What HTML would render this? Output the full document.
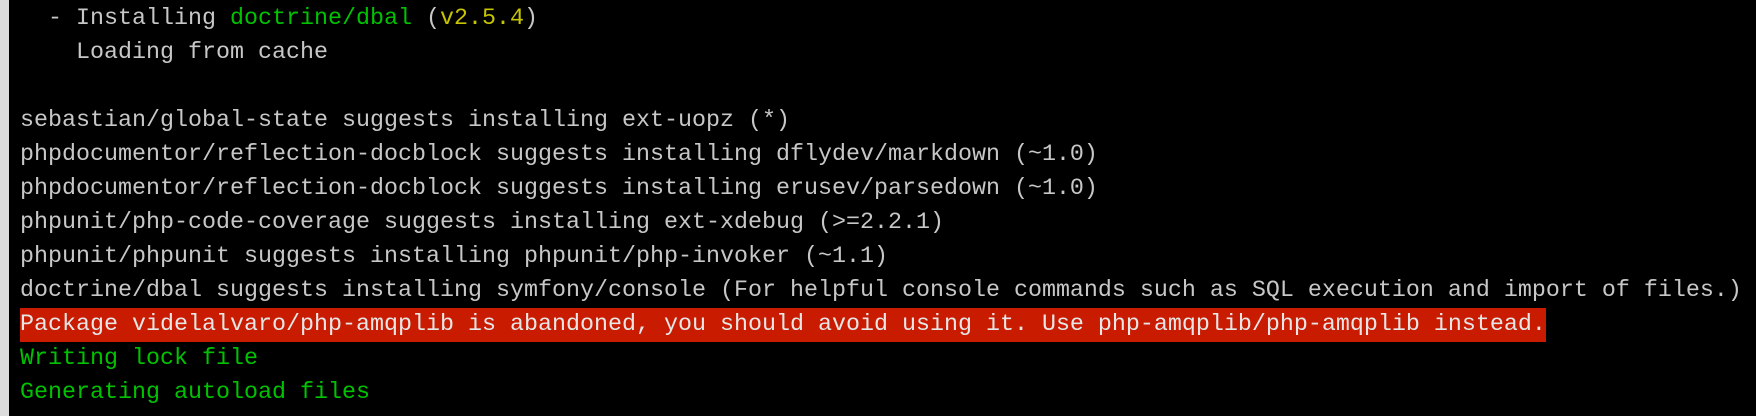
<!DOCTYPE html>
<html><head><meta charset="utf-8"><style>
html,body{margin:0;padding:0;background:#000;width:1756px;height:416px;overflow:hidden}
.strip{position:absolute;left:0;top:0;width:9px;height:416px;background:#dcdcdc}
pre{position:absolute;left:20px;top:2px;margin:0;font-family:"Liberation Mono",monospace;font-size:23.33px;line-height:34px;color:#c7c7c7;white-space:pre}
.g{color:#00c200}.y{color:#c7c400}
.r{background:#c91b00;color:#e6e6e6;display:inline-block;height:34px}
</style></head><body>
<div class="strip"></div>
<pre>  - Installing <span class="g">doctrine/dbal</span> (<span class="y">v2.5.4</span>)
    Loading from cache

sebastian/global-state suggests installing ext-uopz (*)
phpdocumentor/reflection-docblock suggests installing dflydev/markdown (~1.0)
phpdocumentor/reflection-docblock suggests installing erusev/parsedown (~1.0)
phpunit/php-code-coverage suggests installing ext-xdebug (>=2.2.1)
phpunit/phpunit suggests installing phpunit/php-invoker (~1.1)
doctrine/dbal suggests installing symfony/console (For helpful console commands such as SQL execution and import of files.)
<span class="r">Package videlalvaro/php-amqplib is abandoned, you should avoid using it. Use php-amqplib/php-amqplib instead.</span>
<span class="g">Writing lock file</span>
<span class="g">Generating autoload files</span></pre>
</body></html>
